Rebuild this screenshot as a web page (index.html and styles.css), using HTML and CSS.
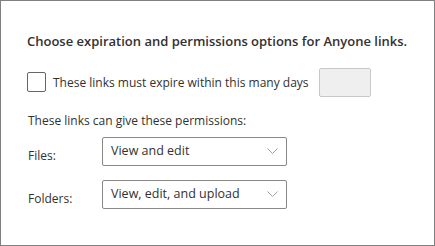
FILE: index.html
```html
<!DOCTYPE html>
<html lang="en">
<head>
    <meta charset="UTF-8">
    <title>Anyone links</title>
    <link rel="stylesheet" href="styles.css">
</head>
<body>
    <div class="panel">
        <h1>Choose expiration and permissions options for Anyone links.</h1>
        <!-- Expiration -->
        <div class="expire">
            <span class="checkbox"></span>
            <span class="expire-label">These links must expire within this many days</span>
            <span class="days"></span>
        </div>
        <!-- Permissions -->
        <p class="perm-title">These links can give these permissions:</p>
        <div class="perm-row">
            <span class="perm-label">Files:</span>
            <div class="select">
                <span>View and edit</span>
                <svg width="11" height="6" viewBox="0 0 11 6"><path d="M0.5 0.5 L5.5 5.5 L10.5 0.5" fill="none" stroke="#a19f9d" stroke-width="1"/></svg>
            </div>
        </div>
        <div class="perm-row">
            <span class="perm-label">Folders:</span>
            <div class="select">
                <span>View, edit, and upload</span>
                <svg width="11" height="6" viewBox="0 0 11 6"><path d="M0.5 0.5 L5.5 5.5 L10.5 0.5" fill="none" stroke="#a19f9d" stroke-width="1"/></svg>
            </div>
        </div>
    </div>
</body>
</html>
```

FILE: styles.css
```css
body {
    margin: 0;
    font-family: "Open Sans", Arial, sans-serif;
    color: #323130;
    background: #ffffff;
}
.panel {
    width: 435px;
    height: 246px;
    box-sizing: border-box;
    border: 1px solid #808080;
    padding: 31px 20px 0 26px;
}
h1 {
    margin: 0;
    font-size: 13px;
    font-weight: 600;
    line-height: 18px;
    white-space: nowrap;
}
.expire {
    display: flex;
    align-items: center;
    margin-top: 18px;
}
.checkbox {
    width: 17px;
    height: 18px;
    border: 1px solid #666666;
    border-radius: 2px;
    margin-top: -2px;
}
.expire-label {
    margin-left: 7px;
    font-size: 12px;
}
.days {
    margin-left: 10px;
    width: 50px;
    height: 27px;
    background: #efefef;
    border: 1px solid #c8c8c8;
    border-radius: 2px;
}
.perm-title {
    margin: 15px 0 0 1px;
    font-size: 12px;
    line-height: 18px;
}
.perm-row {
    display: flex;
    align-items: center;
    margin-top: 7px;
}
.perm-row + .perm-row {
    margin-top: 14px;
}
.perm-label {
    width: 74px;
    padding-left: 1px;
    padding-top: 7px;
    font-size: 12px;
}
.select {
    width: 167px;
    height: 27px;
    border: 1px solid #8a8886;
    border-radius: 2px;
    display: flex;
    align-items: center;
    justify-content: space-between;
    padding: 0 8px 0 8px;
    font-size: 12.5px;
}
.select span {
    margin-top: -2px;
}
.select svg {
    margin-top: -2px;
}
```
